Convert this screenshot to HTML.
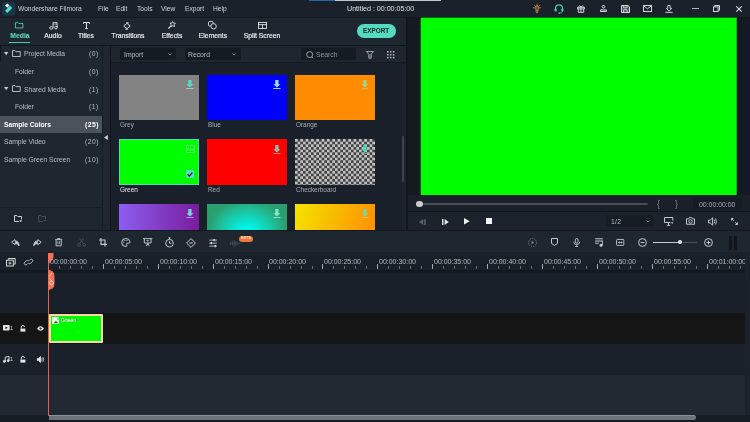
<!DOCTYPE html>
<html>
<head>
<meta charset="utf-8">
<title>Wondershare Filmora</title>
<style>
*{box-sizing:border-box;margin:0;padding:0}
html,body{width:750px;height:422px;overflow:hidden;background:#1b222b;font-family:"Liberation Sans",sans-serif;color:#c9ced4}
.a{position:absolute}
.t{position:absolute;white-space:nowrap;line-height:1;transform:rotate(.01deg) scaleY(1.07);transform-origin:0 74%}
svg{position:absolute;overflow:visible}
#app{position:relative;width:750px;height:422px;overflow:hidden;will-change:transform}

/* title bar */
#titlebar{left:0;top:0;width:750px;height:17px;background:#1a212a}
#titlebar .t{font-size:6.7px;top:6.1px;color:#d0d4d9;letter-spacing:-.03px}
/* tab bar */
#tabbar{left:0;top:17px;width:406px;height:29px;background:#1e2630;border-top:1px solid #141a21;border-bottom:1.300px solid #10151b}
.tab{position:absolute;top:32.9px;font-size:6.8px;color:#e6e9ec;-webkit-text-stroke:.2px #e6e9ec;white-space:nowrap;line-height:1;transform:translateX(-50%) rotate(.01deg) scaleY(1.05);transform-origin:50% 74%}
/* left panel */
#left{left:0;top:46px;width:102px;height:184px;background:#1e2630}
#left .t{font-size:6.8px;color:#b9bfc6;letter-spacing:-.05px}
#left .cnt{right:3.300px;letter-spacing:.45px}
#leftfoot{left:0;top:207px;width:102px;height:23px;background:#1d252e;border-top:1px solid #171d25}
#gap1{left:102px;top:46px;width:8px;height:184px;background:#1f262f;border-left:1px solid #181e26}
/* media */
#media{left:110px;top:46px;width:296px;height:184px;background:#19202a;overflow:hidden}
#mtool{left:0;top:0;width:296px;height:17px;background:#1e2630;border-bottom:1px solid #151b22}
.dd{position:absolute;top:2.2px;height:12.2px;background:#151b23;border-radius:2px}
.dd .t{font-size:6.8px;top:3.5px;color:#b9bfc6}
.th{position:absolute;width:80px;height:45px}
.lb{position:absolute;transform:rotate(.01deg) scaleY(1.07);transform-origin:0 74%;font-size:6.4px;color:#aab0b7;line-height:1;white-space:nowrap}
/* preview */
#pv{left:406px;top:17px;width:344px;height:213px;background:#151a22;border-left:2px solid #11161c}
#green{left:421px;top:18px;width:315px;height:177px;background:#00fe00}
#scrub{left:408px;top:195px;width:342px;height:17px;background:#1a2029;border-bottom:1px solid #12171d}
#ctrl{left:408px;top:212px;width:342px;height:18px;background:#1c232c}
/* timeline */
#tbar{left:0;top:230px;width:750px;height:22px;background:#1e2630;border-top:1px solid #12171d}
#ruler{left:0;top:252px;width:750px;height:18px;background:#1b222b}
#trk0{left:0;top:270px;width:750px;height:43px;background:#1a2029}
#trk1{left:0;top:313px;width:750px;height:31px;background:#151516}
#trk2{left:0;top:344px;width:750px;height:31px;background:#1b212a}
#trk3{left:0;top:375px;width:750px;height:40px;background:#222932}
#hs{left:0;top:415px;width:750px;height:7px;background:#161c23}
.rl{position:absolute;transform:rotate(.01deg);top:258px;font-size:7px;color:#b6bbc1;line-height:1;white-space:nowrap}
</style>
</head>
<body>
<div id="app">

<!-- ===== TITLE BAR ===== -->
<div id="titlebar" class="a">
  <svg style="left:2.200px;top:2.200px" width="13.400" height="13.400" viewBox="0 0 13.400 13.400">
    <rect x="0" y="0" width="13.400" height="13.400" rx="2.600" fill="#17364a"/>
    <path d="M5.300 1.600l2.200 2-2.200 2.200-2.200-2.200z" fill="#f2f6f5"/>
    <path d="M7.900 3.700l2.300 2.400-4.900 5-2.200-2.400z" fill="#4fe3c1"/>
  </svg>
  <div class="t" style="left:17.5px">Wondershare Filmora</div>
  <div class="t" style="left:97.5px">File</div>
  <div class="t" style="left:116px">Edit</div>
  <div class="t" style="left:137px">Tools</div>
  <div class="t" style="left:161px">View</div>
  <div class="t" style="left:184.6px">Export</div>
  <div class="t" style="left:213px">Help</div>
  <div class="t" style="left:346.8px;top:5.8px;font-size:7.15px;color:#dde0e4">Untitled : 00:00:05:00</div>
  <div class="a" style="left:309px;top:0;width:26px;height:1.2px;background:#1f67a8"></div>
  <div class="a" style="left:335px;top:0;width:106px;height:1.2px;background:#c2c6ca"></div>
  <!-- bulb -->
  <svg style="left:533.300px;top:4.300px" width="8" height="9" viewBox="0 0 8 9" fill="none" stroke="#b98a55" stroke-width=".8" stroke-linecap="round">
    <path d="M4 1.700a2.100 2.100 0 0 1 1.300 3.800v.9h-2.600v-.9a2.100 2.100 0 0 1 1.300-3.800z" fill="#6b4f33"/>
    <path d="M3 7.600h2M3.400 8.600h1.200M4 .2v.4M1.200 1.200l.3.300M6.800 1.200l-.3.300M.3 3.700h.4M7.300 3.700h.4"/>
  </svg>
  <!-- headset -->
  <svg style="left:554px;top:4px" width="10" height="10" viewBox="0 0 10 10" fill="none" stroke="#40c9b1" stroke-linecap="round">
    <path d="M1.500 5v-.6a3.500 3.500 0 0 1 7 0v.6" stroke-width="1.200"/>
    <rect x=".5" y="4.400" width="2.200" height="3.200" rx=".8" fill="#40c9b1" stroke="none"/>
    <rect x="7.300" y="4.400" width="2.200" height="3.200" rx=".8" fill="#40c9b1" stroke="none"/>
    <path d="M8.500 7.600q-.2 1.500-2.600 1.600" stroke-width=".9"/>
    <rect x="4.200" y="8.500" width="2" height="1.200" rx=".6" fill="#40c9b1" stroke="none"/>
  </svg>
  <!-- gift -->
  <svg style="left:577px;top:4.5px" width="8" height="8" viewBox="0 0 8 8" fill="none" stroke="#d5d9dd" stroke-width="1">
    <path d="M0.5 2.3h7v1.6h-7z"/><path d="M1.3 4v3.3h5.4V4M4 2.3v5"/><path d="M4 2 q-2.2 -2.4 -2.4 -.4 M4 2 q2.2 -2.4 2.4 -.4" stroke-width=".9"/>
  </svg>
  <!-- person -->
  <svg style="left:599.5px;top:5px" width="7" height="7" viewBox="0 0 7 7" fill="none" stroke="#d5d9dd" stroke-width="1">
    <circle cx="3.5" cy="1.7" r="1.3"/><path d="M.6 6.5v-1.6h5.8v1.6z"/>
  </svg>
  <!-- save -->
  <svg style="left:620.5px;top:5px" width="9" height="8" viewBox="0 0 9 8" fill="none" stroke="#d5d9dd" stroke-width="1">
    <path d="M.5 .5h6.5l1.5 1.4v5.6h-8z" fill="#4a525a"/><path d="M2.6 .6v2.2h3.4v-2.2M2.6 7.4v-2.6h3.6v2.6" stroke-width=".9"/>
  </svg>
  <!-- mail -->
  <svg style="left:642.5px;top:5px" width="9" height="7" viewBox="0 0 9 7" fill="none" stroke="#d5d9dd" stroke-width="1">
    <rect x=".5" y=".5" width="8" height="6"/><path d="M.7 .8l3.8 3 3.8-3"/>
  </svg>
  <!-- download -->
  <svg style="left:665px;top:4.5px" width="8" height="8" viewBox="0 0 8 8" fill="none" stroke="#d5d9dd" stroke-width="1">
    <path d="M2.8 .5h2.4v2.8h1.6l-2.8 2.6-2.800-2.600h1.600z" stroke-width=".9"/><path d="M.4 7.3h7.200"/>
  </svg>
  <!-- window controls -->
  <div class="a" style="left:691.5px;top:8px;width:7px;height:1px;background:#aeb4ba"></div>
  <svg style="left:713px;top:5px" width="7" height="7" viewBox="0 0 7 7" fill="none" stroke="#d5d9dd" stroke-width="1">
    <path d="M1.8 1.600v-1.100h4.700v4.700h-1.100"/><rect x=".5" y="1.900" width="4.600" height="4.600" fill="#1a212a"/>
  </svg>
  <svg style="left:736px;top:5.500px" width="6" height="6" viewBox="0 0 6 6" fill="none" stroke="#d5d9dd" stroke-width="1.1">
    <path d="M.3 .3l5.400 5.400M5.700 .3l-5.400 5.400"/>
  </svg>
</div>

<!-- ===== TAB BAR ===== -->
<div id="tabbar" class="a"></div>
<div class="tab" style="left:19.5px;color:#5fe6c8;font-weight:bold;-webkit-text-stroke:0">Media</div>
<div class="tab" style="left:52.5px">Audio</div>
<div class="tab" style="left:86px">Titles</div>
<div class="tab" style="left:127.5px">Transitions</div>
<div class="tab" style="left:171.5px">Effects</div>
<div class="tab" style="left:212.5px">Elements</div>
<div class="tab" style="left:262px">Split Screen</div>
<div class="a" style="left:9px;top:41.700px;width:20.600px;height:1.100px;background:#48c8ac"></div>
<div class="a" style="left:357px;top:24px;width:39px;height:14px;border-radius:7px;background:#55dcc0"></div>
<div class="t" style="left:362.5px;top:28px;font-size:6.4px;font-weight:bold;color:#0d2320">EXPORT</div>


<!-- tab icons -->
<svg style="left:14.900px;top:22.100px" width="8.400" height="6.500" viewBox="0 0 9 7" fill="none" stroke="#46c8ac" stroke-width="1" stroke-linejoin="round"><path d="M.5 .6h2.600l.9 1h4.500v4.800h-8z"/></svg>
<svg style="left:48.600px;top:21.600px" width="9" height="8" viewBox="0 0 9 8" fill="none" stroke="#dfe3e7" stroke-width=".9"><path d="M4 5.600v-5h4.100v5.200"/><path d="M4 2.100h4.100" stroke-width=".6"/><ellipse cx="2.400" cy="5.900" rx="1.700" ry="1.300"/><ellipse cx="6.900" cy="5.600" rx="1.300" ry="1.500"/></svg>
<svg style="left:82.500px;top:22px" width="7" height="7" viewBox="0 0 7 7" fill="none" stroke="#dfe3e7" stroke-width="1">
  <path d="M.5 1.800v-1.300h6v1.300M3.500 .5v6M2.200 6.500h2.600"/>
</svg>
<svg style="left:123.100px;top:21.600px" width="8" height="8" viewBox="0 0 8 8" fill="none" stroke="#dfe3e7" stroke-width=".9" stroke-linejoin="round"><path d="M4 1.400l3.300 2.600-3.300 2.600-3.300-2.600z"/><path d="M3.300 .9h2.300M2.400 7.100h2.300" stroke-width="1.300"/></svg>
<svg style="left:167.800px;top:21.300px" width="8" height="8" viewBox="0 0 8 8" fill="none" stroke="#dfe3e7" stroke-width=".9" stroke-linejoin="round"><path d="M4.600 .5l.9 1.600 1.900.2-1.300 1.400.4 1.900-1.900-.9-1.700.9.400-1.900-1.400-1.400 1.900-.2z"/><path d="M3 4.900l-2.600 2.600" stroke-width="1.200"/></svg>
<svg style="left:208px;top:21px" width="9" height="9" viewBox="0 0 9 9" fill="none" stroke="#dfe3e7" stroke-width=".9"><rect x=".5" y=".5" width="4.600" height="4.600" rx="1.200"/><circle cx="5.600" cy="5.300" r="2.700" fill="#1e2630"/></svg>
<svg style="left:257.500px;top:22px" width="9" height="7" viewBox="0 0 9 7" fill="none" stroke="#dfe3e7" stroke-width=".9">
  <rect x=".5" y=".5" width="8" height="6"/><path d="M.5 2.600h8M4.500 2.600v3.900"/>
</svg>

<!-- ===== LEFT PANEL ===== -->
<div id="left" class="a">
  <div class="a" style="left:0;top:0;width:.800px;height:15px;background:#12171d"></div>

  <svg style="left:3.8px;top:6.2px" width="4.400" height="3.200" viewBox="0 0 4.400 3.200"><path d="M0 0h4.400l-2.200 3.200z" fill="#c5cad0"/></svg>
  <svg style="left:12px;top:4px" width="9" height="7" viewBox="0 0 9 7" fill="none" stroke="#c5cad0" stroke-width=".9" stroke-linejoin="round"><path d="M.5 .6h2.500l.9 1h4.300v4.900h-7.700z"/></svg>
  <svg style="left:3.8px;top:41.400px" width="4.400" height="3.200" viewBox="0 0 4.400 3.200"><path d="M0 0h4.400l-2.200 3.200z" fill="#c5cad0"/></svg>
  <svg style="left:12px;top:39.200px" width="9" height="7" viewBox="0 0 9 7" fill="none" stroke="#c5cad0" stroke-width=".9" stroke-linejoin="round"><path d="M.5 .6h2.500l.9 1h4.300v4.900h-7.700z"/></svg>
  <div class="t" style="left:23.5px;top:5px">Project Media</div><div class="t cnt" style="top:5px">(0)</div>
  <div class="t" style="left:14.5px;top:23px">Folder</div><div class="t cnt" style="top:23px">(0)</div>
  <div class="t" style="left:23.5px;top:41px">Shared Media</div><div class="t cnt" style="top:41px">(1)</div>
  <div class="t" style="left:14.5px;top:58px">Folder</div><div class="t cnt" style="top:58px">(1)</div>
  <div class="a" style="left:0;top:70px;width:102px;height:17px;background:#4a525c"></div>
  <div class="t" style="left:3.5px;top:76px;color:#fff;font-weight:bold">Sample Colors</div><div class="t cnt" style="top:76px;color:#fff;font-weight:bold">(25)</div>
  <div class="t" style="left:3.5px;top:93px">Sample Video</div><div class="t cnt" style="top:93px">(20)</div>
  <div class="t" style="left:3.5px;top:111px">Sample Green Screen</div><div class="t cnt" style="top:111px">(10)</div>
</div>
<div id="leftfoot" class="a">
  <svg style="left:14px;top:6.700px" width="8.600" height="7.600" viewBox="0 0 9 8" fill="none" stroke="#d5d9dd" stroke-width="1" stroke-linejoin="round"><path d="M5.200 6.800h-4.700v-6.200h2.500l.9 1h4v3"/><path d="M5.600 5.600h3l-1.500 2z" fill="#d5d9dd" stroke="none"/></svg>
  <svg style="left:37.500px;top:6.700px" width="8.600" height="7.600" viewBox="0 0 9 8" fill="none" stroke="#48505a" stroke-width="1" stroke-linejoin="round"><path d="M5.200 6.800h-4.700v-6.200h2.500l.9 1h4v3"/><path d="M5.800 5.800h2.600" /></svg>
</div>
<div id="gap1" class="a"></div>
<svg style="left:104.300px;top:135px" width="3.800" height="5" viewBox="0 0 3.800 5"><path d="M3.800 0v5l-3.800-2.500z" fill="#d0d4d8"/></svg>

<!-- ===== MEDIA ===== -->
<div id="media" class="a">
  <div class="a" style="left:0;top:0;width:1.300px;height:184px;background:#10151b;z-index:3"></div>
  <div id="mtool" class="a"></div>
  <div class="dd" style="left:10px;width:55.5px"><div class="t" style="left:4.2px">Import</div></div>
  <div class="dd" style="left:74.5px;width:56px"><div class="t" style="left:3.7px">Record</div></div>
  <div class="dd" style="left:191.3px;width:54.4px"><div class="t" style="left:14.5px;color:#8f969e">Search</div></div>
  <svg style="left:57.700px;top:7.200px" width="4.200" height="2.600" viewBox="0 0 5 3" fill="none" stroke="#8d949c" stroke-width="1"><path d="M.5 .4l2 2 2-2"/></svg>
  <svg style="left:122.200px;top:7.200px" width="4.200" height="2.600" viewBox="0 0 5 3" fill="none" stroke="#8d949c" stroke-width="1"><path d="M.5 .4l2 2 2-2"/></svg>
  <svg style="left:195.500px;top:4.500px" width="8" height="8" viewBox="0 0 8 8" fill="none" stroke="#aab0b7" stroke-width=".9"><circle cx="3.700" cy="3.600" r="3"/><path d="M5.800 5.900l1.400 1.400"/></svg>
  <svg style="left:256px;top:4.500px" width="8" height="8" viewBox="0 0 8 8" fill="none" stroke="#aab0b7" stroke-width=".9" stroke-linejoin="round"><path d="M.5 .5h7l-2.300 2.800v3.900h-2.400v-3.900z"/><path d="M2.800 3.300v3.900h2.400v-3.900z" fill="#6a727b" stroke="none"/></svg>
  <svg style="left:277px;top:4.700px" width="8" height="8" viewBox="0 0 8 8" fill="#aab0b7"><rect x="0" y="0" width="1.600" height="1.600"/><rect x="2.900" y="0" width="1.600" height="1.600"/><rect x="5.800" y="0" width="1.600" height="1.600"/><rect x="0" y="2.900" width="1.600" height="1.600"/><rect x="2.900" y="2.900" width="1.600" height="1.600"/><rect x="5.800" y="2.900" width="1.600" height="1.600"/><rect x="0" y="5.800" width="1.600" height="1.600"/><rect x="2.900" y="5.800" width="1.600" height="1.600"/><rect x="5.800" y="5.800" width="1.600" height="1.600"/></svg>


  <div class="th" style="left:9px;top:29px;background:#838383"></div>
  <div class="th" style="left:97px;top:29px;background:#0000fe"></div>
  <div class="th" style="left:185px;top:29px;background:#ff8c00"></div>
  <div class="lb" style="left:10px;top:76px">Grey</div>
  <div class="lb" style="left:97.5px;top:76px">Blue</div>
  <div class="lb" style="left:185.5px;top:76px">Orange</div>

  <div class="th" style="left:9px;top:93px;height:46px;background:#00fe00;border:1px solid #4fd8ba"></div>
  <div class="th" style="left:97px;top:93px;height:45.5px;background:#fe0000"></div>
  <div class="th" style="left:185px;top:93px;height:45.5px;background:conic-gradient(#404040 25%,#c4c4c4 0 50%,#404040 0 75%,#c4c4c4 0) 0 0/5.333px 5.333px"></div>
  <div class="lb" style="left:10px;top:140.5px;color:#e8ebee">Green</div>
  <div class="lb" style="left:97.5px;top:140.5px">Red</div>
  <div class="lb" style="left:185.5px;top:140.5px">Checkerboard</div>

  <div class="th" style="left:9px;top:158px;background:linear-gradient(90deg,#8c5ef2,#7a1c9c)"></div>
  <div class="th" style="left:97px;top:158px;background:radial-gradient(ellipse 50% 75% at 50% 64%,#00fcf2,#04eedc 25%,#1cc4a0 65%,#2a9e6e 100%)"></div>
  <div class="th" style="left:185px;top:158px;background:linear-gradient(105deg,#f4e400,#ff8a00)"></div>
  <svg style="left:75.8px;top:34px" width="8" height="9" viewBox="0 0 8 9"><path d="M2.300 0h3.200v4.200h1.900l-3.500 3.200-3.500-3.200h1.900z" fill="#4fe0c0"/><rect x=".3" y="8" width="7.200" height=".9" fill="#b4d2cc"/></svg>
  <svg style="left:163.3px;top:34px" width="8" height="9" viewBox="0 0 8 9"><path d="M2.300 0h3.200v4.200h1.900l-3.500 3.200-3.500-3.200h1.900z" fill="#8fe4f4"/><rect x=".3" y="8" width="7.200" height=".9" fill="#c4e6ff"/></svg>
  <svg style="left:251.3px;top:34px" width="8" height="9" viewBox="0 0 8 9"><path d="M2.300 0h3.200v4.200h1.900l-3.500 3.200-3.500-3.200h1.900z" fill="#9fd48a"/><rect x=".3" y="8" width="7.200" height=".9" fill="#dcae66"/></svg>
  <svg style="left:163.3px;top:98.5px" width="8" height="9" viewBox="0 0 8 9"><path d="M2.300 0h3.200v4.200h1.900l-3.500 3.200-3.500-3.200h1.900z" fill="#8cc4b4"/><rect x=".3" y="8" width="7.200" height=".9" fill="#ff8c8c"/></svg>
  <svg style="left:251.3px;top:98.5px" width="8" height="9" viewBox="0 0 8 9"><path d="M2.300 0h3.200v4.200h1.900l-3.500 3.200-3.500-3.200h1.900z" fill="#4fd8b8"/><rect x=".3" y="8" width="7.200" height=".9" fill="#8e9a98"/></svg>
  <svg style="left:75.8px;top:162.5px" width="8" height="9" viewBox="0 0 8 9"><path d="M2.300 0h3.200v4.200h1.900l-3.500 3.200-3.500-3.200h1.900z" fill="#74d6dc"/><rect x=".3" y="8" width="7.200" height=".9" fill="#b9a2e2"/></svg>
  <svg style="left:163.3px;top:162.5px" width="8" height="9" viewBox="0 0 8 9"><path d="M2.300 0h3.200v4.200h1.900l-3.500 3.200-3.500-3.200h1.900z" fill="#7fe6ce"/><rect x=".3" y="8" width="7.200" height=".9" fill="#8fdcc4"/></svg>
  <svg style="left:251.3px;top:162.5px" width="8" height="9" viewBox="0 0 8 9"><path d="M2.300 0h3.200v4.200h1.900l-3.500 3.200-3.500-3.200h1.900z" fill="#7fd49c"/><rect x=".3" y="8" width="7.200" height=".9" fill="#dcc466"/></svg>
  <svg style="left:75.500px;top:99px" width="9" height="8" viewBox="0 0 9 8" fill="none" stroke="#86f7a0" stroke-width=".7"><rect x=".4" y=".4" width="8.200" height="7.200"/><path d="M.6 5.400l1.800-2 1.600 2 1.400-1.400 1.400 1.400 1.600-2"/></svg>
  <div class="a" style="left:75.500px;top:124.300px;width:8.500px;height:8.200px;background:#58dcc2;border-radius:1px"></div>
  <svg style="left:76.800px;top:126.300px" width="6" height="5" viewBox="0 0 6 5" fill="none" stroke="#10201e" stroke-width="1.300"><path d="M.6 2.400l1.700 1.600 3.100-3.400"/></svg>
  <div class="a" style="left:291.500px;top:18px;width:4.500px;height:166px;background:#1d242d"></div>
  <div class="a" style="left:292.300px;top:90px;width:2px;height:46px;background:#3a424c;border-radius:1px"></div>
</div>

<!-- ===== PREVIEW ===== -->
<div id="pv" class="a"></div>
<div class="a" style="left:421px;top:17px;width:316px;height:1px;background:#0c6a14"></div>
<div id="green" class="a"></div>
<div class="a" style="left:420px;top:18px;width:1px;height:177px;background:#0f5a18"></div>
<div class="a" style="left:736px;top:18px;width:1px;height:177px;background:#07b80b"></div>
<div id="scrub" class="a">
  <div class="a" style="left:12px;top:8.300px;width:228px;height:1.400px;background:#474e57;border-radius:1px"></div>
  <div class="a" style="left:8px;top:5.700px;width:6.600px;height:6.600px;border-radius:50%;background:#c8ccd0"></div>
  <div class="t" style="left:248.500px;top:4.500px;font-size:8.500px;color:#7d858d">{</div>
  <div class="t" style="left:266.500px;top:4.500px;font-size:8.500px;color:#7d858d">}</div>
  <div class="a" style="left:285px;top:3px;width:48.500px;height:11px;background:#151b22;border-radius:2px"></div>
  <div class="t" style="left:290.500px;top:7px;font-size:6.900px;color:#aab0b7">00:00:00:00</div>
</div>
<div id="ctrl" class="a">
  <!-- prev frame (dim) -->
  <svg style="left:11.300px;top:6.500px" width="7" height="6" viewBox="0 0 7 6" fill="#59616a"><path d="M4.200 0v6l-4.200-3z"/><rect x="5.200" y="0" width="1.500" height="6"/></svg>
  <!-- next frame -->
  <svg style="left:33.600px;top:6.500px" width="7" height="6" viewBox="0 0 7 6" fill="#e4e7ea"><rect x="0" y="0" width="1.500" height="6"/><path d="M2.600 0v6l4.200-3z"/></svg>
  <!-- play -->
  <svg style="left:56px;top:6.200px" width="6" height="7" viewBox="0 0 6 7" fill="#f2f4f5"><path d="M0 0v6.600l5.700-3.300z"/></svg>
  <!-- stop -->
  <div class="a" style="left:78px;top:6.400px;width:5.800px;height:5.800px;background:#f2f4f5"></div>
  <!-- quality -->
  <div class="a" style="left:198px;top:3.300px;width:46.500px;height:12px;background:#171d25;border-radius:2px"></div>
  <div class="t" style="left:202.500px;top:7.200px;font-size:6.800px;color:#b9bfc6;letter-spacing:.3px">1/2</div>
  <svg style="left:237.800px;top:8px" width="4.200" height="2.600" viewBox="0 0 5 3" fill="none" stroke="#8d949c" stroke-width="1"><path d="M.5 .4l2 2 2-2"/></svg>
  <!-- monitor -->
  <svg style="left:256px;top:5.300px" width="10" height="9" viewBox="0 0 10 9" fill="none" stroke="#c2c7cd" stroke-width="1"><path d="M6.200 5.500h-5.700v-5h8.300v3.200"/><path d="M2.800 8.300h3.400M4.500 5.600v2.600"/><path d="M6.800 5.300h2.800l-1.400 1.800z" fill="#c2c7cd" stroke="none"/></svg>
  <!-- camera -->
  <svg style="left:278.300px;top:5.300px" width="9" height="8" viewBox="0 0 9 8" fill="none" stroke="#c2c7cd" stroke-width="1" stroke-linejoin="round"><path d="M.5 1.800h2l.7-1.200h2.600l.7 1.200h2v5.400h-8z"/><circle cx="4.500" cy="4.300" r="1.700"/></svg>
  <!-- speaker -->
  <svg style="left:300.300px;top:5.300px" width="9" height="9" viewBox="0 0 9 9" fill="none" stroke="#c2c7cd" stroke-width="1" stroke-linejoin="round"><path d="M.5 3.100h1.700l2.400-2.300v7.400l-2.400-2.300h-1.700z"/><path d="M6.200 2.600q1 1.900 0 3.800M7.600 1.400q1.700 3.100 0 6.200" stroke-width=".9"/></svg>
  <!-- fullscreen -->
  <svg style="left:323px;top:6px" width="7.200" height="7.200" viewBox="0 0 8 8" fill="none" stroke="#c2c7cd" stroke-width="1.100"><path d="M.5 2.800v-2.300h2.300M.8 .8l2.300 2.300M7.200 4.900v2.300h-2.300M6.900 6.900l-2.300-2.300"/></svg>
</div>

<!-- ===== TIMELINE ===== -->
<div id="tbar" class="a">
  <!-- undo -->
  <svg style="left:11.300px;top:8px" width="8.800" height="7.700" viewBox="0 0 8 7" fill="none" stroke="#c6cbd0" stroke-width=".9" stroke-linejoin="round"><path d="M3.600 .6l-3 2.300 3 2.300v-1.300q2.500 0 3.700 2.300q0-4.300-3.700-4.500z"/><path d="M3.800 1.900q3.400.3 3.500 4.200q-1.200-2.200-3.500-2.200z" fill="#c6cbd0" stroke="none"/></svg>
  <!-- redo -->
  <svg style="left:32.800px;top:8px" width="8.800" height="7.700" viewBox="0 0 8 7" fill="none" stroke="#c6cbd0" stroke-width=".9" stroke-linejoin="round"><path d="M4.400 .6l3 2.300-3 2.300v-1.300q-2.500 0-3.700 2.300q0-4.300 3.700-4.500z"/><path d="M4.200 1.900q-3.400.3-3.500 4.200q1.200-2.200 3.500-2.200z" fill="#c6cbd0" stroke="none"/></svg>
  <!-- trash -->
  <svg style="left:55.400px;top:7px" width="7.400" height="8.400" viewBox="0 0 8 9" fill="none" stroke="#c6cbd0" stroke-width="1"><path d="M.3 1.700h7.400M2.800 1.500v-1h2.400v1M1.200 1.900v6.500h5.600v-6.500"/><path d="M3.100 3.400v3.400M4.900 3.400v3.400" stroke-width=".8"/></svg>
  <!-- scissors dim -->
  <svg style="left:76.800px;top:7.400px" width="9" height="9" viewBox="0 0 9 9" fill="none" stroke="#4a525b" stroke-width=".9"><circle cx="1.900" cy="6.800" r="1.400"/><circle cx="7.100" cy="6.800" r="1.400"/><path d="M2.700 5.600l3.800-5.300M6.300 5.600l-3.800-5.300"/></svg>
  <!-- crop -->
  <svg style="left:99.300px;top:7.400px" width="8" height="9" viewBox="0 0 8 9" fill="none" stroke="#c6cbd0" stroke-width="1.100"><path d="M2 0v6.400h6M0 2h6v6.600"/></svg>
  <!-- palette -->
  <svg style="left:120.800px;top:7.200px" width="10" height="9" viewBox="0 0 10 9" fill="none" stroke="#c6cbd0" stroke-width="1"><path d="M4.700 .5a4 4 0 0 0 0 8q1.200 0 1.200-1q0-.8-.5-1.200q-.2-1.100 1-1.100h1.300q1.300 0 1.300-1.400q-.4-3.300-4.300-3.300z"/><circle cx="2.700" cy="4.200" r=".6" fill="#c6cbd0" stroke="none"/><circle cx="3.800" cy="2.400" r=".6" fill="#c6cbd0" stroke="none"/><circle cx="6" cy="2.400" r=".6" fill="#c6cbd0" stroke="none"/></svg>
  <!-- green screen / easel -->
  <svg style="left:142.600px;top:7.400px" width="9.400" height="8.600" viewBox="0 0 10 9" fill="none" stroke="#c6cbd0" stroke-width="1"><path d="M0 .6h10M1.400 .8v4.400h7.200v-4.400"/><path d="M3.400 8.600l1.600-3.300 1.600 3.300M5 5.300v2.400" stroke-width=".9"/><path d="M3.300 2.400l1.700 1.600 1.700-1.600z" fill="#c6cbd0" stroke="none"/></svg>
  <!-- timer -->
  <svg style="left:164.500px;top:6.200px" width="9" height="11" viewBox="0 0 9 11" fill="none" stroke="#c6cbd0" stroke-width="1"><circle cx="4.500" cy="6.200" r="3.800"/><path d="M3.300 .8h2.400M4.500 1v1.400M4.500 4v2.300h1.900" stroke-width=".9"/></svg>
  <!-- keyframe -->
  <svg style="left:186.200px;top:7.300px" width="10" height="10" viewBox="0 0 10 10" fill="none" stroke="#c6cbd0" stroke-width="1" stroke-linejoin="round"><path d="M5 .6l4.400 4.400-4.400 4.400-4.400-4.400z"/><path d="M3.400 5h3.200" stroke-width="1.100"/></svg>
  <!-- sliders -->
  <svg style="left:209.300px;top:7.800px" width="8.400" height="8.400" viewBox="0 0 9 9" fill="none" stroke="#c6cbd0" stroke-width=".9"><path d="M.3 1.200h8.200M.3 4.400h8.200M.3 7.600h8.200"/><rect x="4.800" y="0" width="1.800" height="2.400" fill="#c6cbd0" stroke="none"/><rect x="1.600" y="3.200" width="1.800" height="2.400" fill="#c6cbd0" stroke="none"/><rect x="5.800" y="6.400" width="1.800" height="2.400" fill="#c6cbd0" stroke="none"/></svg>
  <!-- audio wave dim -->
  <svg style="left:230px;top:8.600px" width="10" height="7" viewBox="0 0 10 7" fill="none" stroke="#48505a" stroke-width="1"><path d="M.5 2.600v1.800M2.300 1.400v4.200M4.100 .2v6.600M5.900 1.400v4.200M7.700 2.200v2.600M9.500 3v1"/></svg>
  <!-- beta badge -->
  <div class="a" style="left:239px;top:4.600px;width:14.400px;height:6px;border-radius:3px;background:#f0753a"></div>
  <div class="t" style="left:241.300px;top:6px;font-size:3.600px;font-weight:bold;color:#ffd9c2;letter-spacing:.2px">BETA</div>

  <!-- right group -->
  <svg style="left:527.800px;top:6.800px" width="9" height="9" viewBox="0 0 9 9" fill="none" stroke="#737b84" stroke-width=".9"><circle cx="4.500" cy="4.500" r="4" stroke-dasharray="1.200 1"/><path d="M3.500 2.800v3.400l2.800-1.700z" fill="#737b84" stroke="none"/></svg>
  <svg style="left:550.800px;top:7.400px" width="7" height="8" viewBox="0 0 7 8" fill="none" stroke="#c6cbd0" stroke-width="1" stroke-linejoin="round"><path d="M.5 .5h6v4.900l-3 2.100-3-2.100z"/></svg>
  <svg style="left:572.800px;top:6.800px" width="7.400" height="9.200" viewBox="0 0 8 10" fill="none" stroke="#c6cbd0" stroke-width="1"><rect x="2.500" y=".6" width="3" height="5" rx="1.500"/><path d="M.8 4.200q0 3 3.200 3q3.200 0 3.200-3M4 7.300v1.500M2.400 9.200h3.200" stroke-width=".9"/></svg>
  <svg style="left:594.500px;top:7.200px" width="9" height="9" viewBox="0 0 9 9" fill="none" stroke="#c6cbd0" stroke-width="1"><path d="M.2 .8h7.600M.2 3h7.600M.2 5.200h3.600"/><path d="M7.400 3v4" stroke-width=".9"/><circle cx="6" cy="7.200" r="1.500" fill="#c6cbd0" stroke="none"/></svg>
  <svg style="left:616.100px;top:8.200px" width="8.400" height="7.200" viewBox="0 0 9 8" fill="none" stroke="#c6cbd0" stroke-width="1"><rect x=".5" y=".5" width="8" height="6.600" rx=".8"/><path d="M2.200 3.800h4.600" stroke-width=".9"/><path d="M3.600 2.400l-1.600 1.400 1.600 1.400zM5.400 2.400l1.600 1.400-1.600 1.400z" fill="#c6cbd0" stroke="none"/></svg>
  <svg style="left:637.500px;top:6.800px" width="9" height="9" viewBox="0 0 9 9" fill="none" stroke="#c6cbd0" stroke-width="1"><circle cx="4.500" cy="4.500" r="3.900"/><path d="M2.600 4.500h3.800"/></svg>
  <div class="a" style="left:653.400px;top:10.700px;width:44px;height:1px;background:#4a525b"></div>
  <div class="a" style="left:653.400px;top:10.500px;width:27px;height:1.400px;background:#c8ccd0"></div>
  <div class="a" style="left:677.700px;top:8.900px;width:4.600px;height:4.600px;border-radius:50%;background:#e4e7ea"></div>
  <svg style="left:703.500px;top:6.800px" width="9" height="9" viewBox="0 0 9 9" fill="none" stroke="#c6cbd0" stroke-width="1"><circle cx="4.500" cy="4.500" r="3.900"/><path d="M2.600 4.500h3.800M4.500 2.600v3.800"/></svg>
  <div class="a" style="left:728.600px;top:5px;width:3.700px;height:13.600px;background:#12161b"></div>
  <div class="a" style="left:733.500px;top:5px;width:3.700px;height:13.600px;background:#12161b"></div>
</div>
<div class="a" style="left:0;top:252px;width:750px;height:18px;background:#1a2029"></div>
<!-- playhead -->
<svg style="left:48px;top:252.500px" width="6" height="11" viewBox="0 0 6 11"><path d="M0 0h5.400v5l-4.200 5.600h-1.200z" fill="#f0705a"/></svg>
<div id="ruler" class="a" style="background:none">
  <svg style="left:6px;top:5.600px" width="10" height="9" viewBox="0 0 10 9" fill="none" stroke="#d5d9dd" stroke-width="1"><path d="M2.400 1.800v-1.300h6.800v5.600h-1.400"/><rect x=".5" y="2.200" width="6.800" height="5.800" fill="#1b222b"/><path d="M3.900 3.600v3M2.400 5.100h3" stroke-width=".9"/></svg>
  <svg style="left:23.500px;top:5.800px" width="9" height="8" viewBox="0 0 9 8" fill="none" stroke="#b9bfc6" stroke-width="1" stroke-linecap="round"><path d="M3.700 5.600l-.8.800a1.500 1.500 0 0 1-2.200-2.200l1.600-1.500a1.500 1.500 0 0 1 2.100 0M5.300 2.400l.8-.8a1.500 1.500 0 0 1 2.200 2.200l-1.600 1.500a1.500 1.500 0 0 1-2.100 0"/></svg>
  <div class="a" style="left:48px;top:12.300px;width:1px;height:4.700px;background:#a2a8ae"></div><div class="a" style="left:59px;top:14.300px;width:1px;height:2.500px;background:#666d75"></div><div class="a" style="left:70px;top:14.300px;width:1px;height:2.500px;background:#666d75"></div><div class="a" style="left:81px;top:14.300px;width:1px;height:2.500px;background:#666d75"></div><div class="a" style="left:92px;top:14.300px;width:1px;height:2.500px;background:#666d75"></div><div class="a" style="left:103px;top:12.300px;width:1px;height:4.700px;background:#a2a8ae"></div><div class="a" style="left:114px;top:14.300px;width:1px;height:2.500px;background:#666d75"></div><div class="a" style="left:125px;top:14.300px;width:1px;height:2.500px;background:#666d75"></div><div class="a" style="left:136px;top:14.300px;width:1px;height:2.500px;background:#666d75"></div><div class="a" style="left:147px;top:14.300px;width:1px;height:2.500px;background:#666d75"></div><div class="a" style="left:158px;top:12.300px;width:1px;height:4.700px;background:#a2a8ae"></div><div class="a" style="left:169px;top:14.300px;width:1px;height:2.500px;background:#666d75"></div><div class="a" style="left:180px;top:14.300px;width:1px;height:2.500px;background:#666d75"></div><div class="a" style="left:191px;top:14.300px;width:1px;height:2.500px;background:#666d75"></div><div class="a" style="left:202px;top:14.300px;width:1px;height:2.500px;background:#666d75"></div><div class="a" style="left:213px;top:12.300px;width:1px;height:4.700px;background:#a2a8ae"></div><div class="a" style="left:224px;top:14.300px;width:1px;height:2.500px;background:#666d75"></div><div class="a" style="left:235px;top:14.300px;width:1px;height:2.500px;background:#666d75"></div><div class="a" style="left:246px;top:14.300px;width:1px;height:2.500px;background:#666d75"></div><div class="a" style="left:257px;top:14.300px;width:1px;height:2.500px;background:#666d75"></div><div class="a" style="left:268px;top:12.300px;width:1px;height:4.700px;background:#a2a8ae"></div><div class="a" style="left:279px;top:14.300px;width:1px;height:2.500px;background:#666d75"></div><div class="a" style="left:290px;top:14.300px;width:1px;height:2.500px;background:#666d75"></div><div class="a" style="left:301px;top:14.300px;width:1px;height:2.500px;background:#666d75"></div><div class="a" style="left:312px;top:14.300px;width:1px;height:2.500px;background:#666d75"></div><div class="a" style="left:322px;top:12.300px;width:1px;height:4.700px;background:#a2a8ae"></div><div class="a" style="left:333px;top:14.300px;width:1px;height:2.500px;background:#666d75"></div><div class="a" style="left:344px;top:14.300px;width:1px;height:2.500px;background:#666d75"></div><div class="a" style="left:355px;top:14.300px;width:1px;height:2.500px;background:#666d75"></div><div class="a" style="left:366px;top:14.300px;width:1px;height:2.500px;background:#666d75"></div><div class="a" style="left:377px;top:12.300px;width:1px;height:4.700px;background:#a2a8ae"></div><div class="a" style="left:388px;top:14.300px;width:1px;height:2.500px;background:#666d75"></div><div class="a" style="left:399px;top:14.300px;width:1px;height:2.500px;background:#666d75"></div><div class="a" style="left:410px;top:14.300px;width:1px;height:2.500px;background:#666d75"></div><div class="a" style="left:421px;top:14.300px;width:1px;height:2.500px;background:#666d75"></div><div class="a" style="left:432px;top:12.300px;width:1px;height:4.700px;background:#a2a8ae"></div><div class="a" style="left:443px;top:14.300px;width:1px;height:2.500px;background:#666d75"></div><div class="a" style="left:454px;top:14.300px;width:1px;height:2.500px;background:#666d75"></div><div class="a" style="left:465px;top:14.300px;width:1px;height:2.500px;background:#666d75"></div><div class="a" style="left:476px;top:14.300px;width:1px;height:2.500px;background:#666d75"></div><div class="a" style="left:487px;top:12.300px;width:1px;height:4.700px;background:#a2a8ae"></div><div class="a" style="left:498px;top:14.300px;width:1px;height:2.500px;background:#666d75"></div><div class="a" style="left:509px;top:14.300px;width:1px;height:2.500px;background:#666d75"></div><div class="a" style="left:520px;top:14.300px;width:1px;height:2.500px;background:#666d75"></div><div class="a" style="left:531px;top:14.300px;width:1px;height:2.500px;background:#666d75"></div><div class="a" style="left:542px;top:12.300px;width:1px;height:4.700px;background:#a2a8ae"></div><div class="a" style="left:553px;top:14.300px;width:1px;height:2.500px;background:#666d75"></div><div class="a" style="left:564px;top:14.300px;width:1px;height:2.500px;background:#666d75"></div><div class="a" style="left:575px;top:14.300px;width:1px;height:2.500px;background:#666d75"></div><div class="a" style="left:586px;top:14.300px;width:1px;height:2.500px;background:#666d75"></div><div class="a" style="left:597px;top:12.300px;width:1px;height:4.700px;background:#a2a8ae"></div><div class="a" style="left:608px;top:14.300px;width:1px;height:2.500px;background:#666d75"></div><div class="a" style="left:619px;top:14.300px;width:1px;height:2.500px;background:#666d75"></div><div class="a" style="left:630px;top:14.300px;width:1px;height:2.500px;background:#666d75"></div><div class="a" style="left:641px;top:14.300px;width:1px;height:2.500px;background:#666d75"></div><div class="a" style="left:652px;top:12.300px;width:1px;height:4.700px;background:#a2a8ae"></div><div class="a" style="left:663px;top:14.300px;width:1px;height:2.500px;background:#666d75"></div><div class="a" style="left:674px;top:14.300px;width:1px;height:2.500px;background:#666d75"></div><div class="a" style="left:685px;top:14.300px;width:1px;height:2.500px;background:#666d75"></div><div class="a" style="left:696px;top:14.300px;width:1px;height:2.500px;background:#666d75"></div><div class="a" style="left:707px;top:12.300px;width:1px;height:4.700px;background:#a2a8ae"></div><div class="a" style="left:718px;top:14.300px;width:1px;height:2.500px;background:#666d75"></div><div class="a" style="left:729px;top:14.300px;width:1px;height:2.500px;background:#666d75"></div><div class="a" style="left:740px;top:14.300px;width:1px;height:2.500px;background:#666d75"></div>
</div>
<div class="rl" style="left:49.8px">00:00:00:00</div><div class="rl" style="left:104.7px">00:00:05:00</div><div class="rl" style="left:159.6px">00:00:10:00</div><div class="rl" style="left:214.5px">00:00:15:00</div><div class="rl" style="left:269.4px">00:00:20:00</div><div class="rl" style="left:324.3px">00:00:25:00</div><div class="rl" style="left:379.2px">00:00:30:00</div><div class="rl" style="left:434.1px">00:00:35:00</div><div class="rl" style="left:489.0px">00:00:40:00</div><div class="rl" style="left:543.9px">00:00:45:00</div><div class="rl" style="left:598.8px">00:00:50:00</div><div class="rl" style="left:653.7px">00:00:55:00</div><div class="rl" style="left:708.6px">00:01:00:00</div>
<div id="trk0" class="a"><div class="a" style="left:0;top:0;width:745px;height:2.500px;background:linear-gradient(#11171e,#161c24)"></div></div>
<div id="trk1" class="a">
  <!-- video track label -->
  <svg style="left:2.500px;top:12.400px" width="7" height="6" viewBox="0 0 7 6"><rect x="0" y="0" width="6.600" height="5.600" rx=".8" fill="#e4e7ea"/><path d="M2.400 1.400v2.800l2.300-1.400z" fill="#151617"/></svg>
  <div class="t" style="left:10px;top:12.800px;font-size:5.600px;color:#d5d9dd">1</div>
  <svg style="left:19.800px;top:11.600px" width="6" height="7" viewBox="0 0 6 7" fill="none" stroke="#e4e7ea" stroke-width=".9"><rect x=".4" y="3.600" width="5" height="3" fill="#e4e7ea" stroke="none"/><path d="M1.300 3.600v-1.600a1.600 1.600 0 0 1 3.200 0"/></svg>
  <svg style="left:36.800px;top:12.600px" width="7" height="5" viewBox="0 0 7 5"><path d="M0 2.500q3.500-4.600 7 0q-3.500 4.600-7 0z" fill="#e4e7ea"/><circle cx="3.500" cy="2.500" r="1.100" fill="#151617"/></svg>
  <!-- clip -->
  <div class="a" style="left:48.500px;top:1px;width:54.700px;height:29.300px;background:#00fb00;border:2.200px solid #f7d8a8;border-radius:1px"></div>
  <div class="a" style="left:51.700px;top:3.800px;width:7.400px;height:7.600px;background:#eef8ee"></div>
  <svg style="left:52.600px;top:4.800px" width="6" height="6" viewBox="0 0 6 6"><path d="M.6 5.300l2.300-2.600 2.300 2.600z" fill="#15701f"/><circle cx="5" cy=".9" r=".7" fill="#15701f"/></svg>
  <div class="t" style="left:61.200px;top:5px;font-size:5.400px;font-weight:bold;color:#fff;text-shadow:.4px .4px 0 #0a6a12">Green</div>
</div>
<div id="trk2" class="a">
  <svg style="left:2.500px;top:12.300px" width="7" height="7" viewBox="0 0 7 7" fill="none" stroke="#e4e7ea" stroke-width=".9"><path d="M2.200 5.200v-4l3.800-.8v4"/><circle cx="1.400" cy="5.400" r="1" fill="#e4e7ea"/><circle cx="5.200" cy="4.600" r="1" fill="#e4e7ea"/></svg>
  <div class="t" style="left:10px;top:12.800px;font-size:5.600px;color:#d5d9dd">1</div>
  <svg style="left:19.800px;top:11.600px" width="6" height="7" viewBox="0 0 6 7" fill="none" stroke="#e4e7ea" stroke-width=".9"><rect x=".4" y="3.600" width="5" height="3" fill="#e4e7ea" stroke="none"/><path d="M1.300 3.600v-1.600a1.600 1.600 0 0 1 3.200 0"/></svg>
  <svg style="left:37px;top:12px" width="7" height="7" viewBox="0 0 7 7" fill="none" stroke="#e4e7ea" stroke-width=".8"><path d="M.3 2.400h1.300l2-1.900v6l-2-1.900h-1.300z" fill="#e4e7ea"/><path d="M4.800 2.200q.8 1.300 0 2.600M5.900 1.200q1.400 2.300 0 4.600"/></svg>
</div>
<div id="trk3" class="a"></div>
<div id="hs" class="a">
  <div class="a" style="left:48.500px;top:0;width:647px;height:5px;background:#6c737b;border-top:1px solid #8a9098;border-radius:0 2.500px 2.500px 0"></div>
</div>
<div class="a" style="left:745px;top:252px;width:5px;height:163px;background:#1b222c"></div>
<div class="a" style="left:48px;top:262px;width:1px;height:153.500px;background:#de6650"></div>
<svg style="left:48px;top:270.200px" width="7" height="20" viewBox="0 0 7 20"><path d="M0 0h1.500q5 .6 5 6.500v6.500q0 6-5 6.800h-1.500z" fill="#f0705a"/><g fill="none" stroke="#ffe2c4" stroke-width=".8"><path d="M1.400 6.600l2.200-3.400M1.600 8.400l2 2.600"/><circle cx="3.500" cy="13" r="1.900"/></g></svg>


</div>
</body>
</html>
